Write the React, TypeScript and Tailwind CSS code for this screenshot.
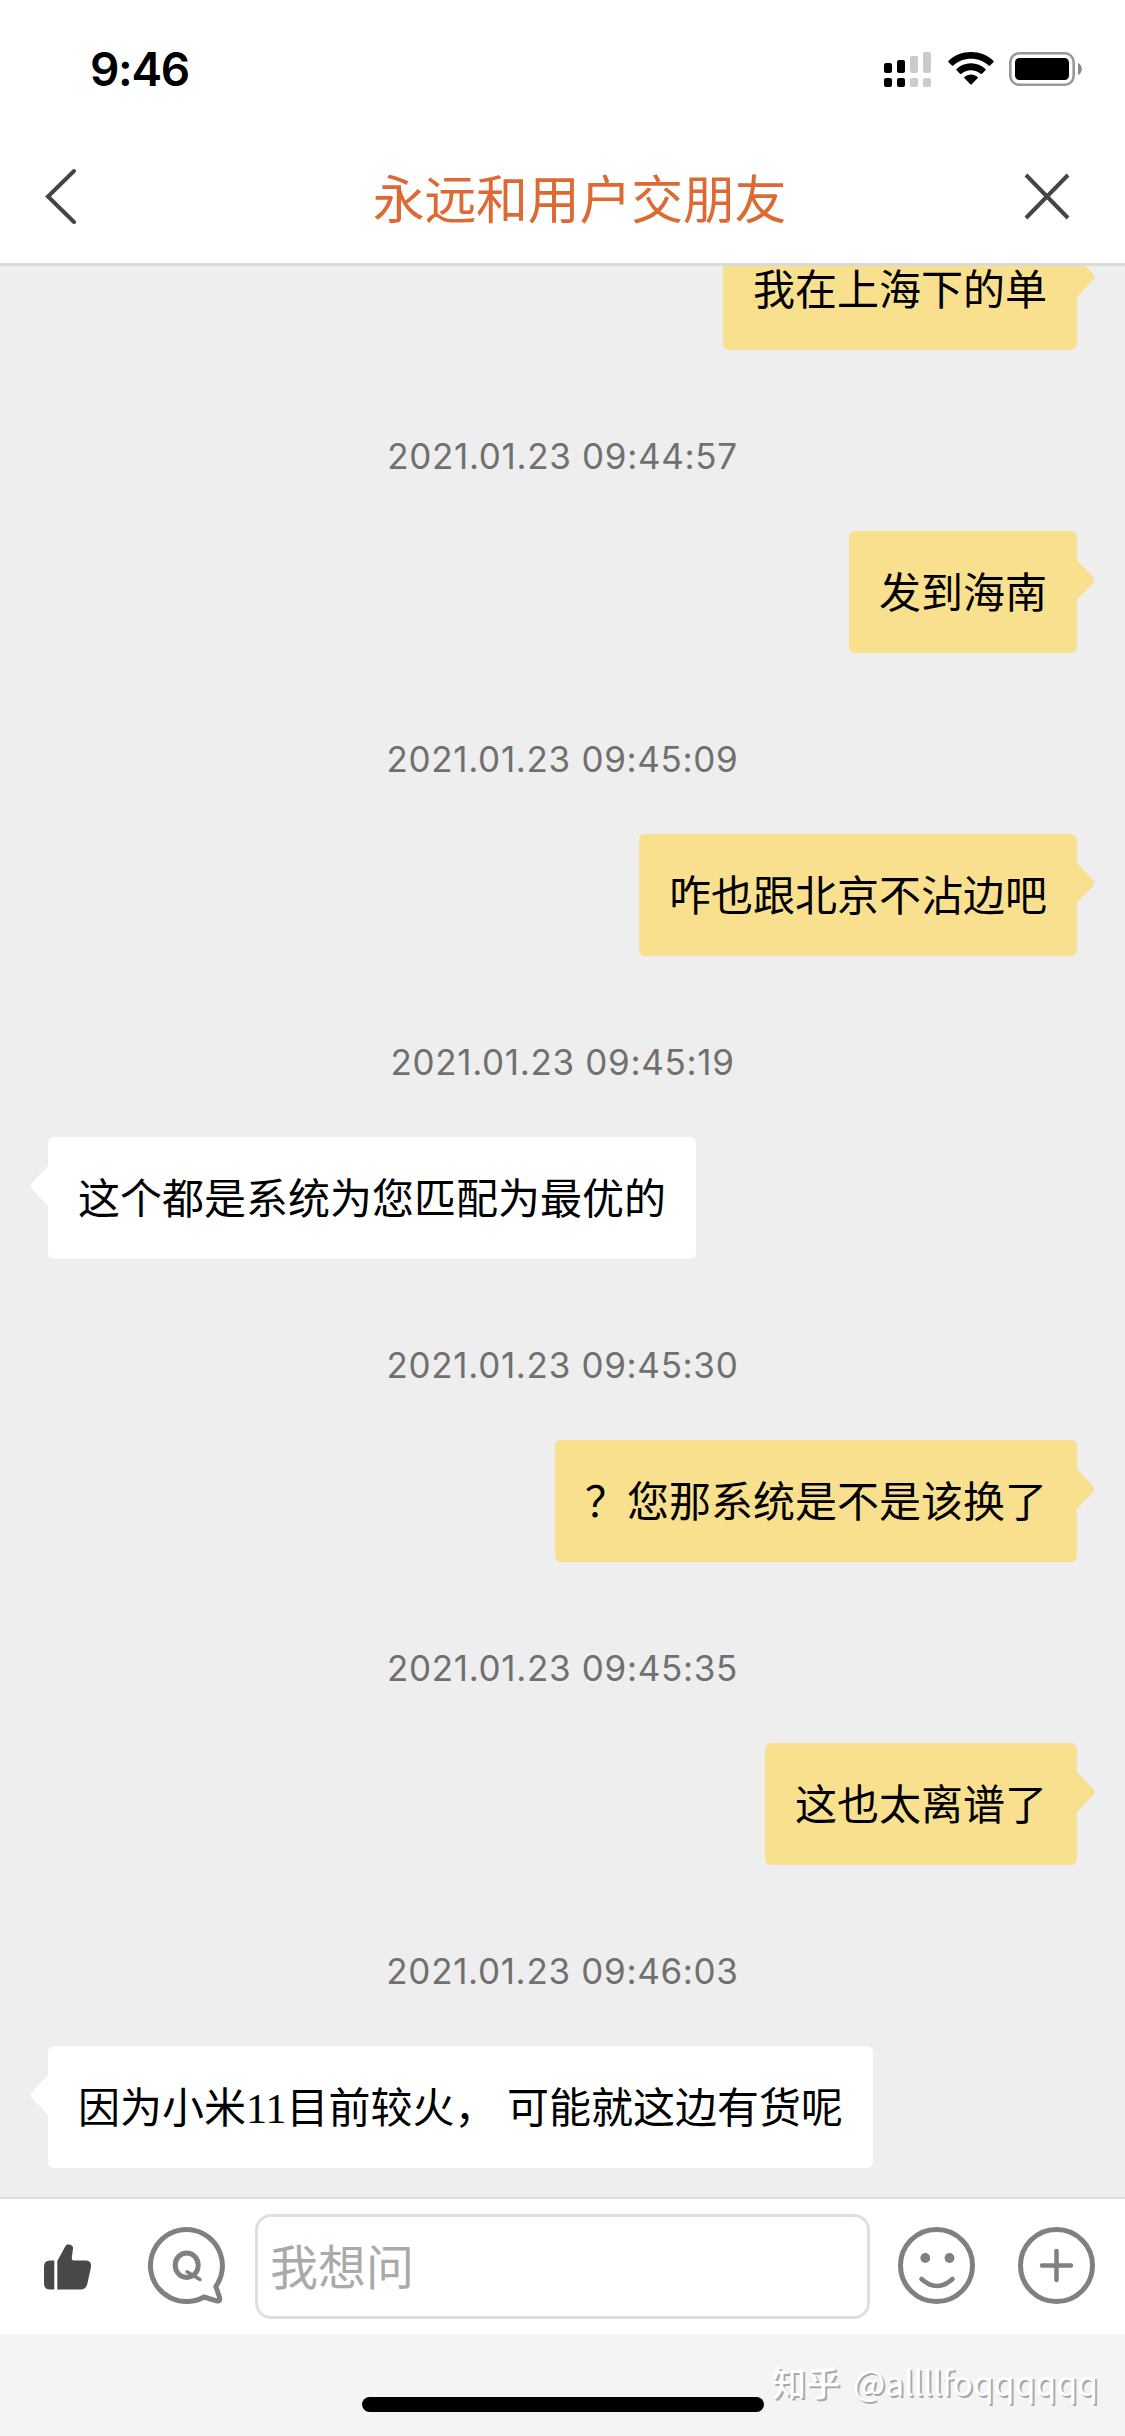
import React from "react";

type Message = { time?: string; text: string; mine: boolean };

const messages: Message[] = [
  { text: "我在上海下的单", mine: true },
  { time: "2021.01.23 09:44:57", text: "发到海南", mine: true },
  { time: "2021.01.23 09:45:09", text: "咋也跟北京不沾边吧", mine: true },
  { time: "2021.01.23 09:45:19", text: "这个都是系统为您匹配为最优的", mine: false },
  { time: "2021.01.23 09:45:30", text: "？您那系统是不是该换了", mine: true },
  { time: "2021.01.23 09:45:35", text: "这也太离谱了", mine: true },
  { time: "2021.01.23 09:46:03", text: "因为小米11目前较火， 可能就这边有货呢", mine: false },
];

function StatusBar() {
  return (
    <div className="flex h-[132px] items-start justify-between pt-[52px] pr-[43px] pl-[90px]">
      <span className="font-['Inter','Liberation_Sans',sans-serif] text-[46px] leading-[34px] font-semibold tracking-[-1.3px] text-black">
        9:46
      </span>
      <div className="flex items-start">
        <svg width="47" height="36" viewBox="0 0 47 36">
          <g fill="#000">
            <rect x="0" y="11" width="8" height="10" rx="2" />
            <rect x="13" y="8" width="8" height="13" rx="2" />
            <rect x="0" y="26" width="8" height="9" rx="2" />
            <rect x="13" y="26" width="8" height="9" rx="2" />
          </g>
          <g fill="#cbcbcb">
            <rect x="26" y="4" width="8" height="17" rx="2" />
            <rect x="39" y="0" width="8" height="21" rx="2" />
            <rect x="26" y="26" width="8" height="9" rx="2" />
            <rect x="39" y="26" width="8" height="9" rx="2" />
          </g>
        </svg>
        <svg className="ml-[17px]" width="46" height="34" viewBox="0 0 46 34">
          <path
            fill="#000"
            d="M23 0C31.700 0 39.600 3.300 45.400 8.800Q46.100 9.500 45.400 10.200L42.100 13.500Q41.400 14.200 40.700 13.500C36 9.300 29.800 6.800 23 6.800S10 9.300 5.300 13.500Q4.600 14.200 3.900 13.500L.6 10.200Q-.1 9.500.6 8.800C6.400 3.300 14.300 0 23 0ZM23 11.300C28.600 11.300 33.600 13.400 37.400 16.900Q38.100 17.600 37.400 18.300L34 21.700Q33.300 22.300 32.600 21.700C30 19.500 26.700 18.200 23 18.200S16 19.500 13.400 21.700Q12.700 22.300 12 21.700L8.600 18.300Q7.900 17.600 8.600 16.900C12.400 13.400 17.400 11.300 23 11.300ZM23 22.500C25.500 22.500 27.800 23.400 29.500 24.900Q30.200 25.600 29.500 26.300L23.700 32.200Q23 32.900 22.300 32.200L16.500 26.300Q15.800 25.600 16.500 24.900C18.200 23.400 20.500 22.500 23 22.500Z"
          />
        </svg>
        <svg className="ml-[15px]" width="73" height="34" viewBox="0 0 73 34">
          <rect x="1.300" y="1.300" width="63.400" height="31.400" rx="9" fill="none" stroke="#999" strokeWidth="2.600" />
          <rect x="6" y="6" width="54" height="22" rx="4.500" fill="#000" />
          <path d="M69 11C74 13 74 21 69 23Z" fill="#888" />
        </svg>
      </div>
    </div>
  );
}

function Header() {
  return (
    <header className="flex h-[134px] items-center justify-between border-b-[3px] border-[#d9d9d9] pr-[54px] pb-[3px] pl-[43px]">
      <svg width="36" height="56" viewBox="0 0 36 56">
        <path d="M31 3L5 28.500L31 54" fill="none" stroke="#454545" strokeWidth="4" strokeLinecap="round" />
      </svg>
      <h1 className="mt-[2px] ml-[57px] text-[52px] leading-[60px] tracking-[-0.3px] text-[#dd6a33]">永远和用户交朋友</h1>
      <svg width="48" height="48" viewBox="0 0 48 48">
        <path d="M3 3L45 46M45 3L3 46" fill="none" stroke="#454545" strokeWidth="4" />
      </svg>
    </header>
  );
}

function Bubble({ text, mine }: { text: string; mine: boolean }) {
  return (
    <div className={mine ? "flex justify-end pr-[48px]" : "flex justify-start pl-[48px]"}>
      <div
        className={
          mine
            ? "relative h-[122px] rounded-[6px] bg-[#f9e08f] px-[30px] pt-[33px]"
            : "relative h-[122px] rounded-[6px] bg-white px-[30px] pt-[33px]"
        }
      >
        <svg
          className={mine ? "absolute top-[28px] -right-[18px]" : "absolute top-[28px] -left-[18px] -scale-x-100"}
          width="19"
          height="42"
          viewBox="0 0 19 42"
        >
          <path d="M0 0L17.500 18.500Q19 21 17.500 23.500L0 42Z" fill={mine ? "#f9e08f" : "#fff"} />
        </svg>
        <p className="font-['Liberation_Serif','Noto_Sans_CJK_SC',serif] text-[42px] leading-[60px] whitespace-pre text-black">
          {text}
        </p>
      </div>
    </div>
  );
}

function InputBar() {
  return (
    <footer className="flex h-[137px] shrink-0 items-center border-t-2 border-[#dcdcdc] bg-white">
      <svg className="ml-[44px]" width="47" height="46" viewBox="0 0 47 46">
        <path
          fill="#484848"
          d="M6 16.500H10.300V45.500H6Q0 45.500 0 39.500V22.500Q0 16.500 6 16.500ZM13.300 45.500V17L21.500 2Q23 -.5 26 .7Q29.200 1.700 29 4.500L27.700 14.500Q27.700 16.500 29.700 16.500H41.500Q47.800 16.700 47 23L43.300 40Q42 45.300 37 45.500Z"
        />
      </svg>
      <svg className="-mt-[1px] ml-[57px]" width="78" height="78" viewBox="0 0 78 78">
        <path
          d="M67.800 59.400A36 36 0 1 0 56 70L68.500 73.800Q72.500 74.800 71.600 70.500Z"
          fill="none"
          stroke="#808080"
          strokeWidth="5"
          strokeLinejoin="round"
        />
        <ellipse cx="38.700" cy="38.200" rx="11.500" ry="12.300" fill="none" stroke="#808080" strokeWidth="5" />
        <path d="M39 44.800L52 52.500" fill="none" stroke="#808080" strokeWidth="3.500" strokeLinecap="round" />
      </svg>
      <div className="ml-[29px] flex h-[105px] w-[615px] items-center rounded-[16px] border-[3px] border-[#dfdfdf] pb-[5px] pl-[12px]">
        <span className="text-[48px] leading-[60px] text-[#aaa]">我想问</span>
      </div>
      <svg className="-mt-[1px] ml-[28px]" width="78" height="78" viewBox="0 0 78 78">
        <circle cx="38.500" cy="38.500" r="36" fill="none" stroke="#808080" strokeWidth="5" />
        <circle cx="27.300" cy="31" r="4.900" fill="#808080" />
        <circle cx="51.500" cy="31" r="4.900" fill="#808080" />
        <path d="M23.500 52Q39 66 54.500 52" fill="none" stroke="#808080" strokeWidth="4.500" strokeLinecap="round" />
      </svg>
      <svg className="-mt-[1px] ml-[42px]" width="78" height="78" viewBox="0 0 78 78">
        <circle cx="38.500" cy="38.500" r="36" fill="none" stroke="#808080" strokeWidth="5" />
        <path d="M38.500 24V53M24 38.500H53" fill="none" stroke="#808080" strokeWidth="4.500" strokeLinecap="round" />
      </svg>
    </footer>
  );
}

export default function App() {
  return (
    <div
      lang="zh-CN"
      className="flex h-[2436px] w-[1125px] flex-col overflow-hidden bg-white font-['Noto_Sans_CJK_SC',sans-serif]"
    >
      <StatusBar />
      <Header />
      <main className="flex h-[1931px] shrink-0 flex-col justify-end overflow-hidden bg-[#eee] pb-[29px]">
        {messages.map((m) => (
          <div key={m.text} className="shrink-0">
            {m.time && (
              <div className="flex h-[181px] justify-center pt-[86px]">
                <time className="h-[40px] font-['Inter','Liberation_Sans',sans-serif] text-[35px] leading-[40px] tracking-[0.68px] text-[#707070]">
                  {m.time}
                </time>
              </div>
            )}
            <Bubble text={m.text} mine={m.mine} />
          </div>
        ))}
      </main>
      <InputBar />
      <div className="relative flex h-[102px] shrink-0 justify-center bg-[#f4f4f4] pt-[63px]">
        <div className="h-[15px] w-[402px] rounded-full bg-black" />
        <span className="absolute top-[28px] right-[27px] flex gap-[13px] text-[34px] leading-[40px] text-white [text-shadow:2px_2px_0_#aaa]">
          <span className="font-medium">知乎</span>
          <span className="tracking-[-0.2px]">@allllfoqqqqqq</span>
        </span>
      </div>
    </div>
  );
}
